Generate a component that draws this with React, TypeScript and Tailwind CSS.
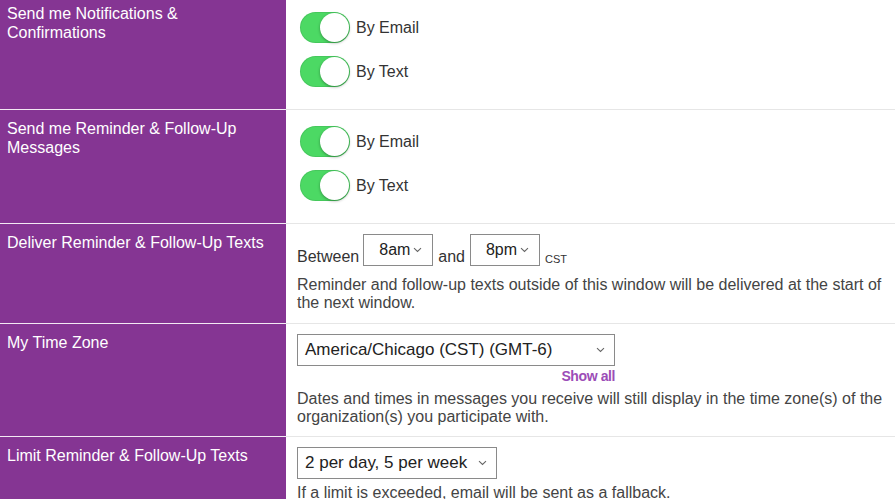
import React from "react";

const Toggle = ({ label }: { label: string }) => (
  <div className="flex items-center gap-[6px]">
    <div className="relative h-[31px] w-[50px] rounded-full bg-[#4cd964] shadow-[inset_0_0_0_1px_rgba(0,0,0,0.08)]">
      <div className="absolute right-[1px] top-[1px] h-[29px] w-[29px] rounded-full bg-white shadow-[0_1px_3px_rgba(0,0,0,0.35)]" />
    </div>
    <span className="text-[16px] leading-[19px] text-[#333]">{label}</span>
  </div>
);

const Chevron = () => (
  <svg width="9" height="6" viewBox="0 0 9 6" className="shrink-0">
    <path d="M1 1.2l3.5 3.3L8 1.2" fill="none" stroke="#666" strokeWidth="1.1" />
  </svg>
);

const Select = ({
  value,
  className,
}: {
  value: string;
  className: string;
}) => (
  <div
    className={
      "flex h-[32px] items-center border border-[#8a8a8a] bg-white text-[#222] " +
      className
    }
  >
    <span className="flex-1 whitespace-nowrap">{value}</span>
    <Chevron />
  </div>
);

const Row = ({
  label,
  height,
  labelTop,
  children,
}: {
  label: string;
  height: string;
  labelTop: string;
  children: React.ReactNode;
}) => (
  <div className={"flex shrink-0 " + height}>
    <div
      className={
        "w-[286px] shrink-0 border-b border-[#f3eaf4] bg-[#853593] px-[7px] text-[16px] leading-[19px] text-white " +
        labelTop
      }
    >
      {label}
    </div>
    <div className="flex-1 border-b border-[#e6e6e6] pl-[11px] pr-[10px]">
      {children}
    </div>
  </div>
);

export default function App() {
  return (
    <div className="flex h-[499px] w-[895px] flex-col overflow-hidden bg-white font-['Liberation_Sans',Arial,sans-serif]">
      <Row label="Send me Notifications & Confirmations" height="h-[110px]" labelTop="pt-[4px]">
        <div className="flex flex-col gap-[13px] pl-[3px] pt-[12px]">
          <Toggle label="By Email" />
          <Toggle label="By Text" />
        </div>
      </Row>

      <Row label="Send me Reminder & Follow-Up Messages" height="h-[114px]" labelTop="pt-[9px]">
        <div className="flex flex-col gap-[13px] pl-[3px] pt-[16px]">
          <Toggle label="By Email" />
          <Toggle label="By Text" />
        </div>
      </Row>

      <Row label="Deliver Reminder & Follow-Up Texts" height="h-[100px]" labelTop="pt-[9px]">
        <div className="pt-[10px]">
          <div className="flex items-end text-[16px] text-[#333]">
            <span className="pb-[1px] leading-[16px]">Between</span>
            <Select value="8am" className="ml-[4px] w-[70px] pl-[15px] pr-[10px] text-[16px]" />
            <span className="ml-[5px] pb-[1px] leading-[16px]">and</span>
            <Select value="8pm" className="ml-[5px] w-[70px] pl-[15px] pr-[10px] text-[16px]" />
            <span className="ml-[5px] pb-[1px] text-[11px] leading-[12px]">CST</span>
          </div>
          <p className="mt-[10px] text-[16px] leading-[18px] text-[#444]">
            Reminder and follow-up texts outside of this window will be delivered at the start of
            the next window.
          </p>
        </div>
      </Row>

      <Row label="My Time Zone" height="h-[113px]" labelTop="pt-[9px]">
        <div className="pt-[10px]">
          <div className="w-[318px]">
            <Select value="America/Chicago (CST) (GMT-6)" className="w-[318px] pl-[7px] pr-[9px] text-[17px]" />
            <div className="mt-[2px] text-right text-[14px] font-bold leading-[17px] tracking-[-0.4px] text-[#9c4db7]">
              Show all
            </div>
          </div>
          <p className="mt-[5px] text-[16px] leading-[18px] text-[#444]">
            Dates and times in messages you receive will still display in the time zone(s) of the
            organization(s) you participate with.
          </p>
        </div>
      </Row>

      <div className="flex min-h-0 flex-1">
        <div className="w-[286px] shrink-0 bg-[#853593] px-[7px] pt-[9px] text-[16px] leading-[19px] text-white">
          Limit Reminder &amp; Follow-Up Texts
        </div>
        <div className="flex-1 pl-[11px] pr-[10px]">
          <div className="pt-[10px]">
            <Select value="2 per day, 5 per week" className="w-[200px] pl-[7px] pr-[9px] text-[17px]" />
            <p className="mt-[5px] text-[16px] leading-[18px] text-[#444]">
              If a limit is exceeded, email will be sent as a fallback.
            </p>
          </div>
        </div>
      </div>
    </div>
  );
}
